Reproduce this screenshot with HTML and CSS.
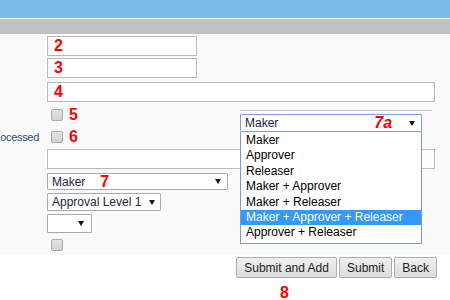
FILE: index.html
```html
<!DOCTYPE html>
<html>
<head>
<meta charset="utf-8">
<link rel="stylesheet" href="styles.css">
</head>
<body>
<header class="topbar"></header>
<div class="subbar"></div>
<main class="content">
  <div class="row r-in2"><span class="label"></span><div class="textbox w150"><span class="mark">2</span></div></div>
  <div class="row r-in3"><span class="label"></span><div class="textbox w150"><span class="mark">3</span></div></div>
  <div class="row r-in4"><span class="label"></span><div class="textbox wide"><span class="mark">4</span></div></div>
  <div class="row r-cb5"><span class="label"></span><span class="checkbox"></span><span class="mark cbmark">5</span></div>
  <div class="row r-cb6"><span class="label"><span>ocessed</span></span><span class="checkbox"></span><span class="mark cbmark">6</span></div>
  <div class="row r-txt"><span class="label"></span><div class="textbox wide"></div></div>
  <div class="row r-sel7"><span class="label"></span><div class="select sel-role"><span class="sel-text">Maker</span><span class="mark sel-mark">7</span><span class="arrow"></span></div></div>
  <div class="row r-app"><span class="label"></span><div class="select sel-level"><span class="sel-text">Approval Level 1</span><span class="arrow"></span></div></div>
  <div class="row r-small"><span class="label"></span><div class="select sel-small"><span class="arrow"></span></div></div>
  <div class="row r-cb"><span class="label"></span><span class="checkbox"></span></div>

  <div class="role-picker">
    <div class="picker-rule"></div>
    <div class="select sel-open"><span class="sel-text">Maker</span><span class="mark open-mark">7a</span><span class="arrow"></span></div>
    <ul class="options">
      <li>Maker</li>
      <li>Approver</li>
      <li>Releaser</li>
      <li>Maker + Approver</li>
      <li>Maker + Releaser</li>
      <li class="selected">Maker + Approver + Releaser</li>
      <li>Approver + Releaser</li>
    </ul>
  </div>
</main>
<div class="actions">
  <button class="btn">Submit and Add</button>
  <button class="btn">Submit</button>
  <button class="btn">Back</button>
</div>
<div class="mark mark-8">8</div>
</body>
</html>
```
FILE: styles.css
```css
body {
  margin: 0;
  font-family: "Liberation Sans", Arial, sans-serif;
  font-size: 12px;
  background: #fff;
}
.topbar {
  height: 18px;
  background: #7bbde8;
  border-bottom: 1px solid #fff;
}
.subbar {
  height: 15px;
  background: #c0c1c5;
}
.content {
  position: relative;
  box-sizing: border-box;
  height: 221px;
  padding-top: 2px;
  background: #fafafa;
}
.row {
  display: flex;
  align-items: center;
}
.label {
  flex: none;
  width: 39px;
  margin-right: 8px;
  display: flex;
  justify-content: flex-end;
  white-space: nowrap;
  color: #234a7c;
  font-size: 11px;
  letter-spacing: -0.3px;
}
.mark {
  color: #ff0000;
  font-weight: bold;
  font-size: 16px;
  line-height: 16px;
  letter-spacing: 0;
}
.textbox {
  box-sizing: border-box;
  height: 20px;
  border: 1px solid #bababa;
  background: #fff;
  padding-left: 6px;
  display: flex;
  align-items: center;
}
.w150 { width: 150px; }
.wide { width: 388px; }

.r-in2 { height: 20px; }
.r-in3 { height: 20px; margin-top: 2px; }
.r-in4 { height: 20px; margin-top: 4px; }
.r-cb5 { height: 16px; margin-top: 5px; }
.r-cb6 { height: 16px; margin-top: 6px; }
.r-txt { height: 20px; margin-top: 4px; }
.r-sel7 { height: 17px; margin-top: 4px; }
.r-app { height: 18px; margin-top: 3px; }
.r-small { height: 19px; margin-top: 3px; }
.r-cb { height: 13px; margin-top: 5px; }

.checkbox {
  box-sizing: border-box;
  width: 12px;
  height: 12px;
  margin-left: 4px;
  border: 1px solid #a9a9a9;
  border-radius: 2px;
  background: linear-gradient(#e4e4e4, #d2d2d2);
}
.cbmark { margin-left: 6px; }

.select {
  box-sizing: border-box;
  height: 100%;
  display: flex;
  align-items: center;
  border: 1px solid #a9a9a9;
  border-radius: 1px;
  background: #fff;
  padding-left: 4px;
}
.sel-text {
  color: #1b2541;
  white-space: nowrap;
}
.arrow {
  margin-left: auto;
  width: 0;
  height: 0;
  border-left: 3px solid transparent;
  border-right: 3px solid transparent;
  border-top: 5px solid #111;
}
.sel-role { width: 181px; }
.sel-role .arrow { margin-right: 6px; }
.sel-mark { margin-left: 15px; }
.sel-level { width: 114px; }
.sel-level .arrow { margin-left: 8px; margin-right: 6px; }
.sel-small { width: 45px; }
.sel-small .arrow { margin-right: 7px; }

.role-picker {
  position: absolute;
  left: 240px;
  top: 76px;
  width: 192px;
}
.picker-rule {
  height: 1px;
  background: #c9c9c9;
}
.sel-open {
  width: 182px;
  height: 18px;
  margin-top: 3px;
  border-color: #7c9fd8;
}
.sel-open .arrow { margin-right: 6px; }
.open-mark {
  margin-left: 96px;
  font-style: italic;
}
.options {
  list-style: none;
  margin: 0;
  padding: 1px 0 2px;
  box-sizing: border-box;
  width: 182px;
  border: 1px solid #7b9bd0;
  border-top: none;
  background: #fff;
}
.options li {
  height: 15.4px;
  line-height: 15.4px;
  padding-left: 5px;
  color: #000;
  white-space: nowrap;
}
.options li.selected {
  background: #3399ff;
  color: #fff;
}

.actions {
  display: flex;
  justify-content: flex-end;
  gap: 2px;
  margin-top: 2px;
  padding-right: 13px;
}
.btn {
  box-sizing: border-box;
  height: 21px;
  margin: 0;
  padding: 0 7px;
  font-family: "Liberation Sans", Arial, sans-serif;
  font-size: 12px;
  color: #222;
  border: 1px solid #adadad;
  border-radius: 2px;
  background: linear-gradient(#f0f0f0, #dcdcdc);
}
.mark-8 {
  margin-top: 7px;
  padding-left: 280px;
}
```
